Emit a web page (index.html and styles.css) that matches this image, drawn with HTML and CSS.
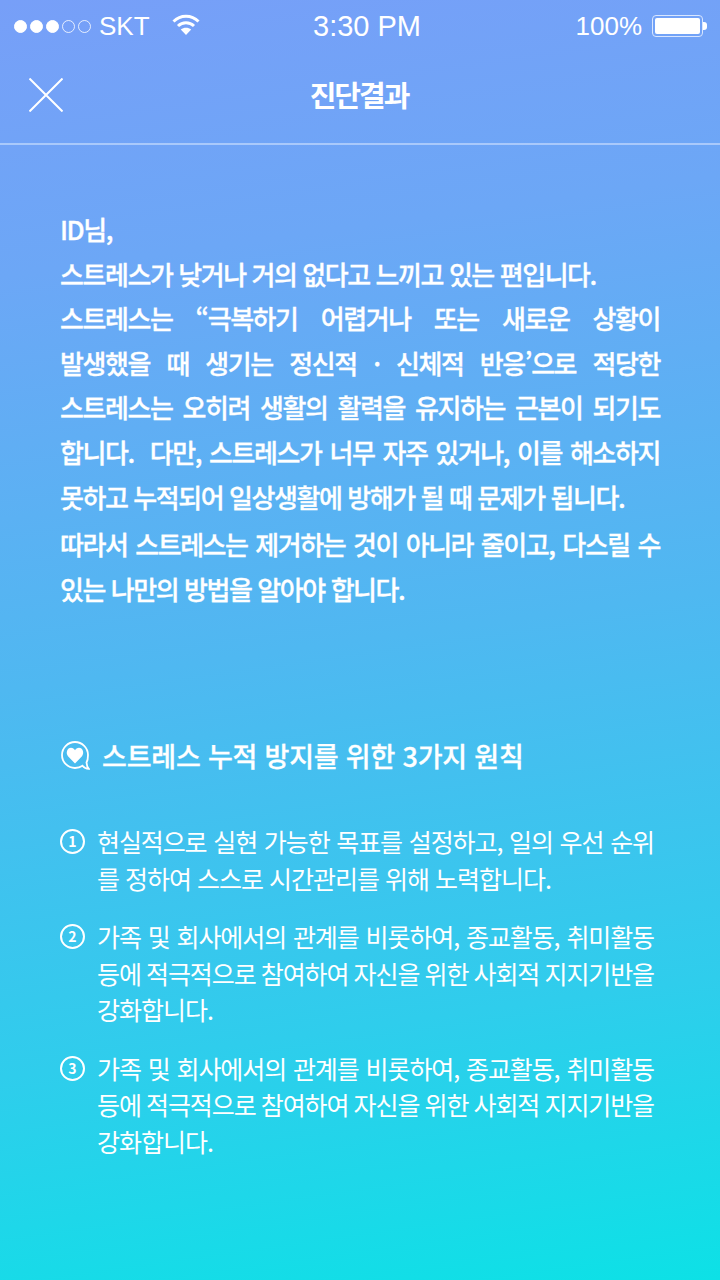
FILE: index.html
```html
<!DOCTYPE html>
<html lang="ko">

<head>
  <meta charset="UTF-8">
  <meta name="viewport" content="width=device-width, initial-scale=1.0">
  <title>진단결과</title>
  <link rel="stylesheet" href="styles.css">
</head>

<body>
  <div class="screen">
    <div class="status-bar">
      <div class="status-left">
        <span class="dots">
          <i class="dot on"></i><i class="dot on"></i><i class="dot on"></i><i class="dot"></i><i class="dot"></i>
        </span>
        <span class="carrier">SKT</span>
        <svg class="wifi" width="28" height="22" viewBox="0 0 28 22" fill="none" stroke="#fff" stroke-width="3">
          <path d="M1.5 8.5C8.5 1.5 19.5 1.5 26.5 8.5" />
          <path d="M6 13C10.5 8.8 17.5 8.8 22 13" />
          <path d="M14 22L8.8 16.6C11.8 14 16.2 14 19.2 16.6Z" fill="#fff" stroke="none" />
        </svg>
      </div>
      <div class="status-time">3:30 PM</div>
      <div class="status-right">
        <span>100%</span>
        <span class="battery"><span class="battery-fill"></span></span>
        <span class="battery-tip"></span>
      </div>
    </div>

    <header class="nav">
      <svg class="close" width="34" height="34" viewBox="0 0 34 34" stroke="#fff" stroke-width="2">
        <path d="M0.500 0.500L33.500 33.500M33.500 0.500L0.500 33.500" />
      </svg>
      <h1>진단결과</h1>
    </header>

    <main class="content">
      <p class="summary">
        <span class="line">ID님,</span>
        <span class="line">스트레스가 낮거나 거의 없다고 느끼고 있는 편입니다.</span>
        <span class="line just">스트레스는 “극복하기 어렵거나 또는 새로운 상황이</span>
        <span class="line just">발생했을 때 생기는 정신적 · 신체적 반응’으로 적당한</span>
        <span class="line just">스트레스는 오히려 생활의 활력을 유지하는 근본이 되기도</span>
        <span class="line just">합니다.&nbsp; 다만, 스트레스가 너무 자주 있거나, 이를 해소하지</span>
        <span class="line">못하고 누적되어 일상생활에 방해가 될 때 문제가 됩니다.</span>
        <span class="line just para-gap">따라서 스트레스는 제거하는 것이 아니라 줄이고, 다스릴 수</span>
        <span class="line">있는 나만의 방법을 알아야 합니다.</span>
      </p>

      <h2 class="rules-title">
        <svg width="30" height="30" viewBox="0 0 30 30">
          <path d="M26.500 21.500C27.800 19.300 28 16.500 28 14A13 13 0 1 0 15 27C18 27 20.500 26.200 22.500 24.800C24 26.800 26.300 27.800 28.800 27.800C27.500 26.500 26.700 24.200 26.500 21.500Z" fill="none" stroke="#fff" stroke-width="1.800" />
          <path d="M15 22.500L8 15.200C5.400 12 7.300 6.800 11 6.800C12.800 6.800 14.200 7.800 15 9.300C15.800 7.800 17.200 6.800 19 6.800C22.700 6.800 24.600 12 22 15.200Z" fill="#fff" />
        </svg>
        <span>스트레스 누적 방지를 위한 3가지 원칙</span>
      </h2>

      <ol class="rules">
        <li>
          <span class="num">1</span>
          <span class="rule-text">
            <span class="line just">현실적으로 실현 가능한 목표를 설정하고, 일의 우선 순위</span>
            <span class="line">를 정하여 스스로 시간관리를 위해 노력합니다.</span>
          </span>
        </li>
        <li>
          <span class="num">2</span>
          <span class="rule-text">
            <span class="line just">가족 및 회사에서의 관계를 비롯하여, 종교활동, 취미활동</span>
            <span class="line just">등에 적극적으로 참여하여 자신을 위한 사회적 지지기반을</span>
            <span class="line">강화합니다.</span>
          </span>
        </li>
        <li>
          <span class="num">3</span>
          <span class="rule-text">
            <span class="line just">가족 및 회사에서의 관계를 비롯하여, 종교활동, 취미활동</span>
            <span class="line just">등에 적극적으로 참여하여 자신을 위한 사회적 지지기반을</span>
            <span class="line">강화합니다.</span>
          </span>
        </li>
      </ol>
    </main>
  </div>
</body>

</html>
```

FILE: styles.css
```css
* {
  box-sizing: border-box;
}

html,
body {
  margin: 0;
  padding: 0;
}

body {
  font-family: "Noto Sans CJK KR", "Noto Sans", sans-serif;
  color: #fff;
}

.screen {
  width: 720px;
  height: 1280px;
  overflow: hidden;
  background: linear-gradient(172deg, #779ff8 0%, #6ca7f6 20%, #4fb8f1 50%, #2fcdec 78%, #0de1e6 100%);
}

.status-bar {
  height: 52px;
  display: grid;
  grid-template-columns: 1fr auto 1fr;
  align-items: center;
  padding: 0 13px 0 14px;
  font-family: "Liberation Sans", Arial, sans-serif;
  font-size: 26px;
}

.status-left,
.status-right {
  display: flex;
  align-items: center;
}

.status-right {
  justify-content: flex-end;
}

.dots {
  display: flex;
  gap: 3px;
  margin-right: 8px;
}

.dot {
  width: 13px;
  height: 13px;
  border-radius: 50%;
  border: 1px solid #fff;
  opacity: 0.8;
}

.dot.on {
  background: #fff;
  opacity: 1;
}

.wifi {
  margin-left: 22px;
  margin-top: -4px;
}

.status-time {
  margin-left: 13px;
  font-size: 29px;
}

.battery {
  width: 51px;
  height: 22px;
  margin-left: 10px;
  padding: 2px;
  border: 1px solid #d8e6ff;
  border-radius: 4px;
}

.battery-fill {
  display: block;
  height: 100%;
  background: #fff;
  border-radius: 2px;
}

.battery-tip {
  width: 4px;
  height: 8px;
  background: #fff;
  border-radius: 0 3px 3px 0;
}

.nav {
  height: 93px;
  display: flex;
  align-items: center;
  justify-content: center;
  position: relative;
  border-bottom: 2px solid #a9c9fb;
}

.close {
  position: absolute;
  left: 29px;
  top: 26px;
}

.nav h1 {
  margin: 0 2px 7px 0;
  font-size: 29px;
  font-weight: 700;
  letter-spacing: -2px;
}

.content {
  padding: 62px 60px 0;
}

.line {
  display: block;
}

.just {
  text-align: justify;
  text-align-last: justify;
}

.summary {
  margin: 0;
  font-size: 26px;
  font-weight: 500;
  line-height: 44.6px;
  letter-spacing: -1.44px;
  -webkit-text-stroke: 0.3px #fff;
}

.para-gap {
  margin-top: 3px;
}

.rules-title {
  display: flex;
  align-items: center;
  gap: 12px;
  margin: 125px 0 0;
  font-size: 27px;
  font-weight: 500;
  letter-spacing: -0.2px;
  line-height: 40px;
  -webkit-text-stroke: 0.3px #fff;
}

.rules {
  list-style: none;
  margin: 47px 0 0;
  padding: 0;
}

.rules li {
  display: flex;
  gap: 12px;
  margin-bottom: 22px;
}

.num {
  flex: none;
  width: 25px;
  height: 25px;
  margin-top: 6px;
  border: 2.5px solid #fff;
  border-radius: 50%;
  font-size: 14px;
  font-weight: 700;
  line-height: 20px;
  text-align: center;
}

.rule-text {
  flex: 1;
  max-width: 557px;
  font-size: 25px;
  font-weight: 400;
  line-height: 36.5px;
  letter-spacing: -1px;
}

.rule-text .just {
  letter-spacing: -1.1px;
  word-spacing: -1px;
}
```
